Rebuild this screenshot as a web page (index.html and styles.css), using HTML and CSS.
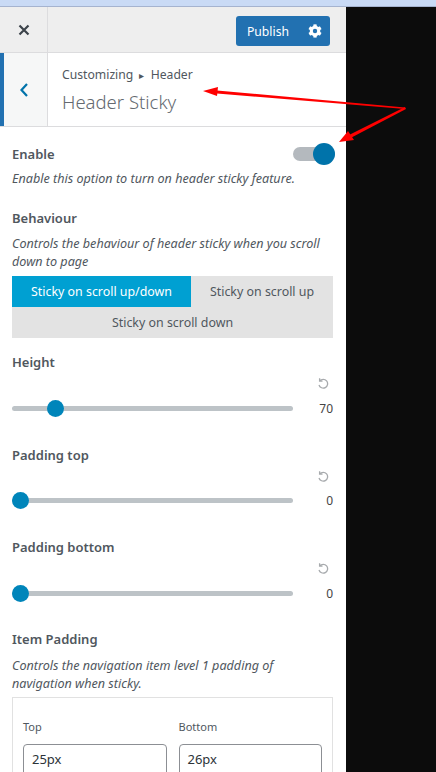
FILE: index.html
```html
<!DOCTYPE html>
<html lang="en">
<head>
    <meta charset="UTF-8">
    <meta name="viewport" content="width=device-width, initial-scale=1.0">
    <title>Header Sticky</title>
    <link rel="stylesheet" href="styles.css">
</head>
<body>
    <div class="top-strip"></div>
    <div class="app">
        <aside class="sidebar">
            <div class="actions">
                <div class="close-cell">
                    <svg width="12" height="12" viewBox="0 0 12 12"><path d="M1.5 1.5l9 9M10.5 1.5l-9 9" stroke="#3c434a" stroke-width="2.2" fill="none"/></svg>
                </div>
                <div class="publish">
                    <span class="publish-text">Publish</span>
                    <svg class="gear" width="14" height="14" viewBox="0 0 512 512"><path fill="#fff" d="M487 316l-42-25a190 190 0 0 0 0-70l42-25c5-3 7-8 5-14-11-35-30-67-54-93-4-4-10-5-15-2l-42 24a187 187 0 0 0-61-35V28c0-6-4-10-9-11a217 217 0 0 0-108 0c-6 1-9 5-9 11v48a190 190 0 0 0-61 35L91 87c-5-3-11-2-15 2-24 26-43 58-54 93-2 6 0 11 5 14l42 25a190 190 0 0 0 0 70l-42 25c-5 3-7 8-5 14 11 35 30 67 54 93 4 4 10 5 15 2l42-24a187 187 0 0 0 61 35v48c0 6 4 10 9 11 37 8 74 8 108 0 6-1 9-5 9-11v-48a190 190 0 0 0 61-35l42 24c5 3 11 2 15-2 24-26 43-58 54-93 2-6 0-11-5-14zM256 336a80 80 0 1 1 0-160 80 80 0 0 1 0 160z"/></svg>
                </div>
            </div>

            <div class="section-head">
                <div class="back">
                    <svg width="10" height="16" viewBox="0 0 10 16"><path d="M8 2L2.5 8 8 14" stroke="#0073aa" stroke-width="2.2" fill="none"/></svg>
                </div>
                <div class="section-title">
                    <div class="crumbs">Customizing <span class="crumb-arrow">&#9656;</span> Header</div>
                    <h2>Header Sticky</h2>
                </div>
            </div>

            <div class="controls">
                <div class="enable-row">
                    <span class="label">Enable</span>
                    <div class="toggle"><div class="toggle-knob"></div></div>
                </div>
                <p class="desc">Enable this option to turn on header sticky feature.</p>

                <div class="label behaviour-label">Behaviour</div>
                <p class="desc">Controls the behaviour of header sticky when you scroll down to page</p>
                <div class="choices">
                    <div class="choice active">Sticky on scroll up/down</div>
                    <div class="choice">Sticky on scroll up</div>
                    <div class="choice wide">Sticky on scroll down</div>
                </div>

                <div class="slider-block first">
                    <div class="label">Height</div>
                    <div class="reset-row">
                        <svg width="12" height="12" viewBox="0 0 12 12"><path d="M2.6 1.2v2.9h2.9M2.8 3.9A4.4 4.4 0 1 1 2 8" stroke="#a7aaad" stroke-width="1.3" fill="none"/></svg>
                    </div>
                    <div class="slider-row">
                        <div class="track"><div class="thumb" style="left: 35px"></div></div>
                        <span class="value">70</span>
                    </div>
                </div>

                <div class="slider-block">
                    <div class="label">Padding top</div>
                    <div class="reset-row">
                        <svg width="12" height="12" viewBox="0 0 12 12"><path d="M2.6 1.2v2.9h2.9M2.8 3.9A4.4 4.4 0 1 1 2 8" stroke="#a7aaad" stroke-width="1.3" fill="none"/></svg>
                    </div>
                    <div class="slider-row">
                        <div class="track"><div class="thumb" style="left: 0"></div></div>
                        <span class="value">0</span>
                    </div>
                </div>

                <div class="slider-block">
                    <div class="label">Padding bottom</div>
                    <div class="reset-row">
                        <svg width="12" height="12" viewBox="0 0 12 12"><path d="M2.6 1.2v2.9h2.9M2.8 3.9A4.4 4.4 0 1 1 2 8" stroke="#a7aaad" stroke-width="1.3" fill="none"/></svg>
                    </div>
                    <div class="slider-row">
                        <div class="track"><div class="thumb" style="left: 0"></div></div>
                        <span class="value">0</span>
                    </div>
                </div>

                <div class="label item-label">Item Padding</div>
                <p class="desc">Controls the navigation item level 1 padding of navigation when sticky.</p>
                <div class="padding-box">
                    <div class="field">
                        <div class="field-label">Top</div>
                        <div class="field-input">25px</div>
                    </div>
                    <div class="field">
                        <div class="field-label">Bottom</div>
                        <div class="field-input">26px</div>
                    </div>
                </div>
            </div>
        </aside>
        <div class="preview"></div>
    </div>

    <svg class="arrows" width="436" height="772" viewBox="0 0 436 772">
        <path d="M405 107.5L217 90.5 217 93.5 405 109z" fill="#f00"/>
        <path d="M405 107L350 134.5 351.5 137.5 406 109z" fill="#f00"/>
        <path d="M203 91L218 87 217 96z" fill="#f00"/>
        <path d="M339 142L348 131 354 140z" fill="#f00"/>
    </svg>
</body>
</html>
```

FILE: styles.css
```css
html, body {
    height: 100%;
}
body {
    margin: 0;
    overflow: hidden;
    position: relative;
    font-family: "Noto Sans", "Open Sans", sans-serif;
    font-size: 13px;
    color: #50575e;
    background: #fff;
}
.top-strip {
    height: 6px;
    background: #c9daf5;
    border-bottom: 1px solid #a5b3cf;
}
.app {
    display: flex;
    height: 765px;
}
.sidebar {
    width: 346px;
    flex-shrink: 0;
    background: #fff;
    overflow: hidden;
}
.preview {
    flex: 1;
    background: #0c0c0c;
}

/* top bar */
.actions {
    display: flex;
    justify-content: space-between;
    height: 45px;
    background: #eeeeee;
    border-bottom: 1px solid #dcdcde;
}
.close-cell {
    width: 47px;
    border-right: 1px solid #dcdcde;
    display: flex;
    align-items: center;
    justify-content: center;
}
.publish {
    display: flex;
    align-items: center;
    width: 94px;
    height: 30px;
    margin: 9px 16px 0 0;
    background: #2271b1;
    border-radius: 3px;
    color: #fff;
}
.publish-text {
    width: 64px;
    text-align: center;
    font-size: 12.2px;
}
.gear {
    margin-left: 8px;
}

/* section header */
.section-head {
    display: flex;
    height: 73px;
    border-bottom: 1px solid #dcdcde;
}
.back {
    width: 48px;
    background: #f6f7f7;
    border-left: 4px solid #2271b1;
    border-right: 1px solid #dcdcde;
    display: flex;
    align-items: center;
    justify-content: center;
    padding-right: 4px;
    box-sizing: border-box;
    flex-shrink: 0;
}
.section-title {
    padding: 13px 0 0 14px;
}
.crumbs {
    font-size: 12.2px;
    line-height: 18px;
}
.crumb-arrow {
    font-size: 10px;
    margin: 0 3px;
}
.section-title h2 {
    margin: 5px 0 0;
    font-size: 18.5px;
    line-height: 26px;
    font-weight: 300;
    color: #646970;
}

/* controls */
.controls {
    padding: 0 13px 0 12px;
}
.label {
    font-weight: 600;
    font-size: 13px;
    line-height: 18px;
}
.desc {
    margin: 0;
    font-size: 12.6px;
    font-style: italic;
    line-height: 18px;
}
.enable-row {
    display: flex;
    justify-content: space-between;
    align-items: center;
    height: 24px;
    margin-top: 15px;
}
.enable-row + .desc {
    margin-top: 4px;
}
.toggle {
    position: relative;
    width: 42px;
    height: 14px;
    margin-right: -2px;
    background: #b4b9be;
    border-radius: 7px;
}
.toggle-knob {
    position: absolute;
    right: 0;
    top: -4px;
    width: 22px;
    height: 22px;
    border-radius: 50%;
    background: #0073aa;
}
.behaviour-label {
    margin-top: 21px;
}
.behaviour-label + .desc {
    margin-top: 8px;
}
.choices {
    display: flex;
    flex-wrap: wrap;
    margin-top: 5px;
    background: #e3e3e3;
}
.choice {
    width: 142px;
    height: 31px;
    line-height: 31px;
    text-align: center;
    font-size: 12.4px;
    flex-grow: 1;
}
.choice.active {
    flex: 0 0 179px;
    background: #00a0d2;
    color: #fff;
}
.choice.wide {
    width: 100%;
}
.slider-block {
    margin-top: 28.5px;
}
.slider-block.first {
    margin-top: 15px;
}
.reset-row {
    display: flex;
    justify-content: flex-end;
    padding-right: 4px;
    height: 12px;
    margin-top: 6px;
}
.slider-row {
    display: flex;
    justify-content: space-between;
    align-items: center;
    height: 18px;
    margin-top: 10px;
}
.track {
    position: relative;
    width: 281px;
    height: 5px;
    background: #bdc3c7;
    border-radius: 3px;
}
.thumb {
    position: absolute;
    top: -6px;
    width: 17px;
    height: 17px;
    border-radius: 50%;
    background: #0085ba;
}
.value {
    font-size: 12px;
    color: #444;
}
.item-label {
    margin-top: 28px;
}
.item-label + .desc {
    margin-top: 9px;
}
.padding-box {
    display: flex;
    gap: 12px;
    margin-top: 4px;
    padding: 21px 10px 0;
    border: 1px solid #e1e1e1;
    height: 80px;
}
.field {
    flex: 1;
}
.field-label {
    font-size: 11px;
    line-height: 16px;
}
.field-input {
    margin-top: 9px;
    height: 30px;
    line-height: 28px;
    padding-left: 8px;
    border: 1px solid #8c8f94;
    border-radius: 4px;
    font-size: 13px;
    color: #2c3338;
}

/* annotation drawn over the screenshot */
.arrows {
    position: absolute;
    left: 0;
    top: 0;
    pointer-events: none;
}
```
